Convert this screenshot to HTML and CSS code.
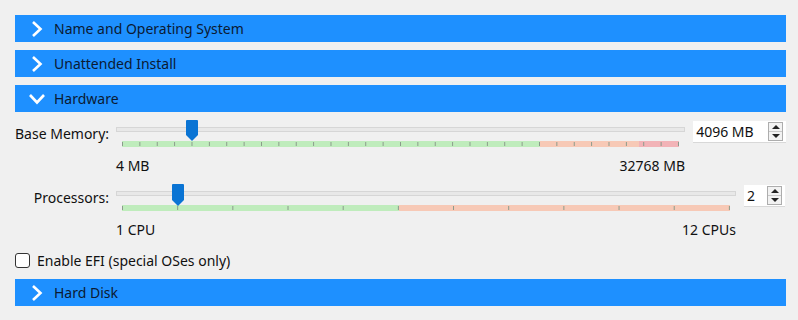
FILE: index.html
```html
<!DOCTYPE html>
<html lang="en">
<head>
    <meta charset="UTF-8">
    <title>Hardware</title>
    <link rel="stylesheet" href="styles.css">
</head>
<body>
    <div class="section-header">
        <svg class="chevron" width="20" height="20" viewBox="0 0 20 20"><path d="M6 3 L13.5 10 L6 17" /></svg>
        <span>Name and Operating System</span>
    </div>
    <div class="section-header">
        <svg class="chevron" width="20" height="20" viewBox="0 0 20 20"><path d="M6 3 L13.5 10 L6 17" /></svg>
        <span>Unattended Install</span>
    </div>
    <div class="section-header">
        <svg class="chevron" width="20" height="20" viewBox="0 0 20 20"><path d="M3 6 L10 13.5 L17 6" /></svg>
        <span>Hardware</span>
    </div>

    <div class="hardware">
        <div class="slider-row">
            <label class="row-label">Base Memory:</label>
            <div class="slider memory">
                <div class="track"></div>
                <svg class="thumb" style="left: 70px" width="12" height="21" viewBox="0 0 12 21"><path d="M1 0 H11 Q12 0 12 1 V15 L6 21 L0 15 V1 Q0 0 1 0 Z" /></svg>
                <div class="ticks"></div>
            </div>
            <div class="spinbox wide">
                <span class="value">4096 MB</span>
                <span class="spin"><i class="up"></i><i class="down"></i></span>
            </div>
        </div>
        <div class="range-labels memory-labels">
            <span>4 MB</span>
            <span>32768 MB</span>
        </div>

        <div class="slider-row cpu-row">
            <label class="row-label">Processors:</label>
            <div class="slider cpu">
                <div class="track"></div>
                <svg class="thumb" style="left: 56px" width="12" height="22" viewBox="0 0 12 22"><path d="M1 0 H11 Q12 0 12 1 V16 L6 22 L0 16 V1 Q0 0 1 0 Z" /></svg>
                <div class="ticks"></div>
            </div>
            <div class="spinbox narrow">
                <span class="value">2</span>
                <span class="spin"><i class="up"></i><i class="down"></i></span>
            </div>
        </div>
        <div class="range-labels cpu-labels">
            <span>1 CPU</span>
            <span>12 CPUs</span>
        </div>

        <label class="checkbox-row">
            <span class="box"></span>
            <span>Enable EFI (special OSes only)</span>
        </label>
    </div>

    <div class="section-header">
        <svg class="chevron" width="20" height="20" viewBox="0 0 20 20"><path d="M6 3 L13.5 10 L6 17" /></svg>
        <span>Hard Disk</span>
    </div>
</body>
</html>
```

FILE: styles.css
```css
body {
    margin: 0;
    padding: 15px 12px 0 15px;
    background: #f0f0f0;
    font-family: "Noto Sans", "Open Sans", sans-serif;
    font-size: 14px;
    color: #111;
}
.section-header {
    display: flex;
    align-items: center;
    height: 27px;
    margin-bottom: 8px;
    background-color: #1e90ff;
    color: #0b1a33;
}
.chevron {
    margin-left: 12px;
    margin-right: 7px;
}
.chevron path {
    fill: none;
    stroke: #fff;
    stroke-width: 2.6;
}
.hardware {
    padding: 0 0 7px 0;
}
.slider-row {
    display: flex;
    align-items: flex-start;
    height: 36px;
}
.row-label {
    width: 94px;
    text-align: right;
    white-space: nowrap;
    padding-top: 4px;
}
.slider {
    position: relative;
    margin-left: 7px;
    height: 32px;
}
.slider.memory {
    width: 570px;
}
.slider.cpu {
    width: 620px;
}
.track {
    margin-top: 7px;
    height: 3px;
    border: 1px solid #d6d6d6;
    background: #e8e8e8;
}
.ticks {
    margin: 9px 6px 0 6px;
    height: 6px;
}
.memory .ticks {
    background-image:
        linear-gradient(to right, #8a9a8a 1px, transparent 1px),
        linear-gradient(to right, #bfecbc 0, #bfecbc 75%, #f7c9b6 75%, #f7c9b6 92.8%, #f2b3b7 92.8%);
    background-size: calc((100% - 1px) / 32) 4px, 100% 100%;
    background-position: 0 1px, 0 0;
    background-repeat: repeat-x, no-repeat;
}
.cpu .ticks {
    background-image:
        linear-gradient(to right, #8a9a8a 1px, transparent 1px),
        linear-gradient(to right, #bfecbc 0, #bfecbc 45.5%, #f7c9b6 45.5%);
    background-size: calc((100% - 1px) / 11) 4px, 100% 100%;
    background-position: 0 1px, 0 0;
    background-repeat: repeat-x, no-repeat;
}
.thumb {
    position: absolute;
    top: 0;
}
.thumb path {
    fill: #0a74d4;
}
.spinbox {
    display: flex;
    align-items: center;
    justify-content: space-between;
    height: 22px;
    margin-left: 8px;
    margin-top: 1px;
    background: #fff;
    border-bottom: 1px solid #d8d8d8;
    padding: 0 3px;
    box-sizing: border-box;
}
.spinbox.wide {
    width: 93px;
}
.spinbox.narrow {
    width: 41px;
}
.spin {
    display: flex;
    flex-direction: column;
    width: 15px;
    height: 19px;
    border: 1px solid #adadad;
    background: #f2f2f2;
    box-sizing: border-box;
}
.spin i {
    flex: 1;
    position: relative;
}
.spin .up {
    border-bottom: 1px solid #c8c8c8;
}
.spin i::after {
    content: "";
    position: absolute;
    left: 3px;
    top: 2px;
    border-left: 4px solid transparent;
    border-right: 4px solid transparent;
}
.spin .up::after {
    border-bottom: 4px solid #222;
}
.spin .down::after {
    border-top: 4px solid #222;
}
.range-labels {
    display: flex;
    justify-content: space-between;
    align-items: center;
    margin-left: 101px;
    margin-top: -4px;
    height: 26px;
}
.memory-labels {
    width: 569px;
}
.cpu-labels {
    width: 620px;
}
.cpu-row {
    margin-top: 6px;
}
.checkbox-row {
    display: flex;
    align-items: center;
    gap: 7px;
    margin-top: 6px;
    height: 24px;
}
.box {
    width: 15px;
    height: 15px;
    border: 1px solid #333;
    border-radius: 3px;
    background: #fff;
    box-sizing: border-box;
}
```
